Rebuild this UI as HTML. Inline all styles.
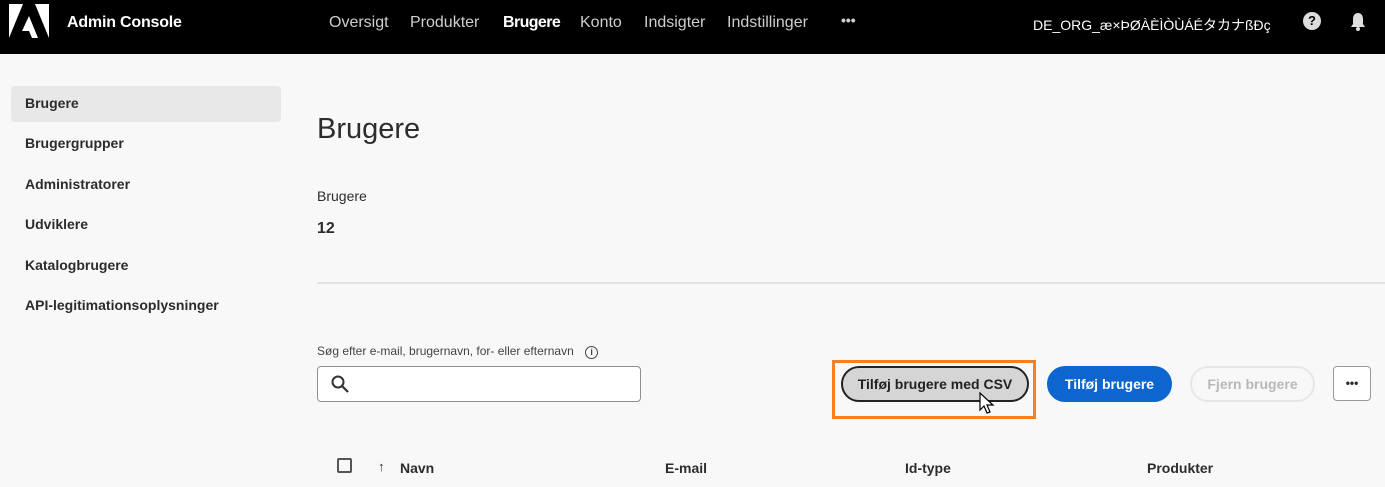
<!DOCTYPE html>
<html><head><meta charset="utf-8"><style>
*{box-sizing:border-box;margin:0;padding:0}
body{width:1385px;height:487px;overflow:hidden;background:#f8f8f8;font-family:"Liberation Sans","Noto Sans CJK JP",sans-serif;color:#2c2c2c;position:relative}
.top{position:absolute;left:0;top:0;width:1385px;height:54px;background:#000;color:#fff}
.a{position:absolute;top:0}
.nav{font-size:16px;color:#cfcfcf;top:14px}
.side{position:absolute;left:25px;font-size:14px;font-weight:bold;color:#2c2c2c}
.btn{position:absolute;height:36px;border-radius:18px;font-size:14px;font-weight:bold;text-align:center;line-height:32px}
</style></head><body>
<div class="top">
<svg class="a" style="left:9px;top:4px" width="40" height="36" viewBox="0 0 40 36"><polygon points="0,0 14,0 0,34" fill="#fff"/><polygon points="26,0 40,0 40,34" fill="#fff"/><polygon points="20,12 29,34 23,34 20,27 13,27" fill="#fff"/></svg>
<div class="a nav" style="left:67px;color:#fff;font-weight:bold;font-size:16px;letter-spacing:-0.2px">Admin Console</div>
<div class="a nav" style="left:329px">Oversigt</div>
<div class="a nav" style="left:410px">Produkter</div>
<div class="a nav" style="left:503px;color:#fff;font-weight:bold;letter-spacing:-0.6px">Brugere</div>
<div class="a nav" style="left:580px">Konto</div>
<div class="a nav" style="left:644px">Indsigter</div>
<div class="a nav" style="left:727px">Indstillinger</div>
<div class="a nav" style="left:841px;font-weight:bold;top:12px;font-size:14px">•••</div>
<div class="a nav" style="left:1033px;color:#fff;font-size:14px;top:15px">DE_ORG_æ×ÞØÀÈÌÒÙÁÉタカナßĐç</div>
<div class="a" style="left:1303px;top:12px;width:18px;height:18px;border-radius:50%;background:#ddd;color:#000;font-size:13px;font-weight:bold;text-align:center;line-height:18px">?</div>
<svg class="a" style="left:1350px;top:12px" width="16" height="19" viewBox="0 0 16 19"><path d="M8 1C4.5 1 3 4 3 7v5L1 15h14l-2-3V7c0-3-1.5-6-5-6z" fill="#ddd"/><circle cx="8" cy="17" r="2" fill="#ddd"/></svg>
</div>
<div style="position:absolute;left:11px;top:86px;width:270px;height:36px;background:#e8e8e8;border-radius:4px"></div>
<div class="side" style="top:95px">Brugere</div>
<div class="side" style="top:135px">Brugergrupper</div>
<div class="side" style="top:176px">Administratorer</div>
<div class="side" style="top:216px">Udviklere</div>
<div class="side" style="top:257px">Katalogbrugere</div>
<div class="side" style="top:297px">API-legitimationsoplysninger</div>
<div style="position:absolute;left:317px;top:113px;font-size:29px">Brugere</div>
<div style="position:absolute;left:317px;top:188px;font-size:14px">Brugere</div>
<div style="position:absolute;left:317px;top:220px;font-size:16px;font-weight:bold">12</div>
<div style="position:absolute;left:317px;top:282px;width:1068px;height:2px;background:#e1e1e1"></div>
<div style="position:absolute;left:317px;top:344px;font-size:12px;color:#444">Søg efter e-mail, brugernavn, for- eller efternavn <span style="display:inline-block;width:13px;height:13px;border:1.5px solid #444;border-radius:50%;font-size:9px;text-align:center;line-height:10px;margin-left:8px;font-weight:bold">i</span></div>
<div style="position:absolute;left:317px;top:366px;width:324px;height:36px;border:1px solid #909090;border-radius:4px;background:#fff"></div>
<svg style="position:absolute;left:331px;top:375px" width="18" height="18" viewBox="0 0 18 18"><circle cx="7" cy="7" r="5.5" stroke="#333" stroke-width="2" fill="none"/><path d="M11 11l6 6" stroke="#333" stroke-width="2.2"/></svg>
<div style="position:absolute;left:832px;top:360px;width:204px;height:59px;border:3px solid #f48024"></div>
<div class="btn" style="left:841px;top:366px;width:188px;background:#d5d5d5;border:2px solid #222;color:#222">Tilføj brugere med CSV</div>
<svg style="position:absolute;left:978px;top:392px" width="20" height="24" viewBox="0 0 20 24"><path d="M2 1v17l4-4 3 7 3-1-3-7h6z" fill="#fff" stroke="#000" stroke-width="1.2"/></svg>
<div class="btn" style="left:1047px;top:366px;width:125px;background:#0d66d0;color:#fff;border:2px solid #0d66d0">Tilføj brugere</div>
<div class="btn" style="left:1190px;top:366px;width:125px;border:2px solid #e6e6e6;color:#b8b8b8">Fjern brugere</div>
<div style="position:absolute;left:1333px;top:366px;width:38px;height:35px;border:1px solid #999;border-radius:4px;background:#fff;text-align:center;font-size:12px;font-weight:bold;line-height:32px">•••</div>
<div style="position:absolute;left:337px;top:458px;width:15px;height:15px;border:2px solid #555;border-radius:2px"></div>
<div style="position:absolute;left:378px;top:459px;font-size:13px;font-weight:bold">↑</div>
<div style="position:absolute;left:400px;top:460px;font-size:14px;font-weight:bold">Navn</div>
<div style="position:absolute;left:665px;top:460px;font-size:14px;font-weight:bold">E-mail</div>
<div style="position:absolute;left:905px;top:460px;font-size:14px;font-weight:bold">Id-type</div>
<div style="position:absolute;left:1147px;top:460px;font-size:14px;font-weight:bold">Produkter</div>
</body></html>
